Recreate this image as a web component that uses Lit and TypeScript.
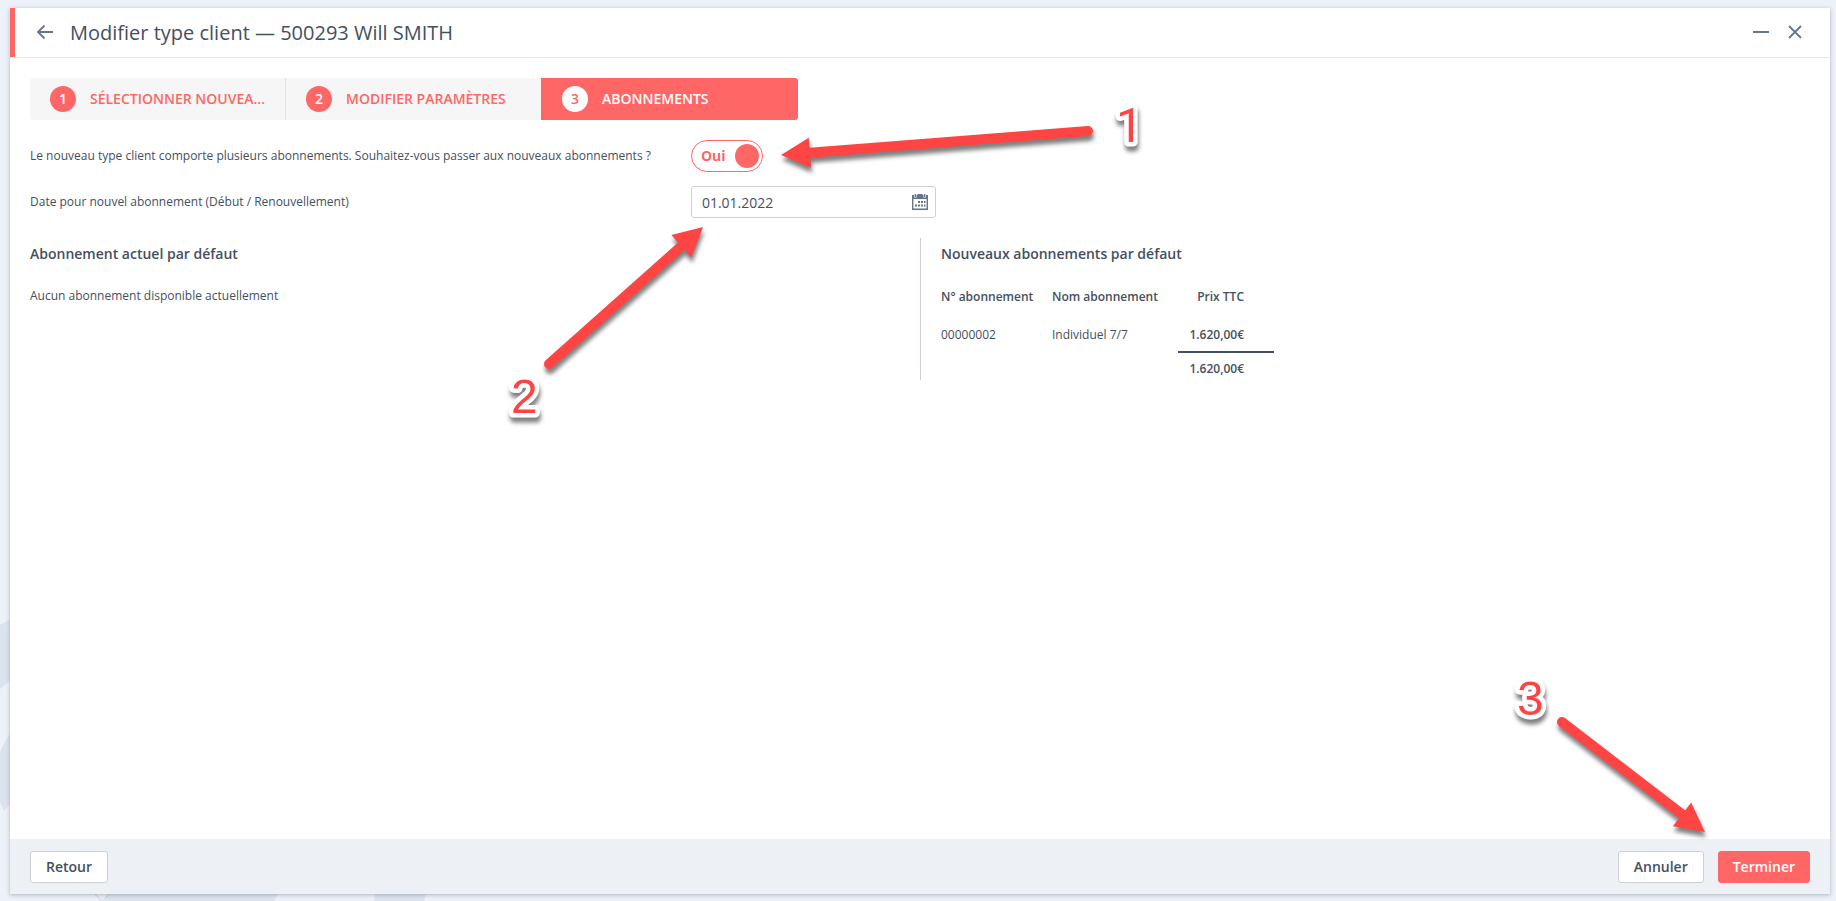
import { LitElement, html, css, svg } from "lit";
import { customElement, property, state } from "lit/decorators.js";

interface Step {
  label: string;
  title: string;
}

interface Subscription {
  id: string;
  name: string;
  price: string;
}

interface Callout {
  digit: string;
  style: string;
  textX: number;
  textY: number;
  tail: [number, number];
  tip: [number, number];
}

const HEAD_LENGTH = 29;
const HEAD_HALF = 15;

/** Wizard step bar with numbered circles. */
@customElement("step-bar")
export class StepBar extends LitElement {
  @property({ attribute: false }) steps: Step[] = [];
  @property({ type: Number }) current = 0;

  static styles = css`
    :host {
      display: block;
    }
    .steps {
      display: grid;
      grid-template-columns: repeat(3, 1fr);
      max-width: 768px;
      margin: 0;
      padding: 0;
      list-style: none;
      border-radius: 3px;
      overflow: hidden;
      background: #f6f6f6;
    }
    .item {
      display: flex;
      min-width: 0;
      border-right: 1px solid #e3e3e5;
    }
    .item:last-child {
      border-right: 0;
    }
    .item.before-active {
      border-right-color: #ff6666;
    }
    .step {
      flex: 1;
      min-width: 0;
      display: flex;
      align-items: center;
      gap: 14px;
      height: 42px;
      padding: 0 0 0 20px;
      border: 0;
      background: none;
      color: #ff6666;
      font: 600 14px/20px "Open Sans", sans-serif;
      text-align: left;
      text-transform: uppercase;
      cursor: pointer;
    }
    .circle {
      flex: none;
      width: 26px;
      height: 26px;
      border-radius: 50%;
      background: #ff6666;
      color: #ffffff;
      line-height: 26px;
      text-align: center;
    }
    .name {
      white-space: nowrap;
    }
    .active .step {
      background: #ff6666;
      color: #ffffff;
    }
    .active .circle {
      background: #ffffff;
      color: #ff6666;
    }
  `;

  private itemClass(i: number) {
    if (i === this.current) return "item active";
    return i === this.current - 1 ? "item before-active" : "item";
  }

  render() {
    return html`<ol class="steps">
      ${this.steps.map(
        (step, i) => html`<li class=${this.itemClass(i)}>
          <button class="step" type="button" title=${step.title}>
            <span class="circle">${i + 1}</span><span class="name">${step.label}</span>
          </button>
        </li>`
      )}
    </ol>`;
  }
}

/** Numbered arrows laid over the dialog. */
@customElement("callout-layer")
export class CalloutLayer extends LitElement {
  @property({ attribute: false }) callouts: Callout[] = [];

  static styles = css`
    :host {
      position: absolute;
      inset: 0;
      overflow: hidden;
      pointer-events: none;
    }
    .canvas {
      display: block;
      width: 100%;
      height: 100%;
    }
    .callout {
      filter: drop-shadow(1px 5px 2px rgba(0, 0, 0, 0.5));
    }
    .shaft {
      stroke: #ff4444;
      stroke-width: 10px;
      stroke-linecap: round;
    }
    .head {
      fill: #ff4444;
    }
    .digit {
      font: 48px "Liberation Sans", Arial, sans-serif;
      fill: #ff4444;
      stroke: #ffffff;
      stroke-width: 9px;
      stroke-linejoin: round;
      paint-order: stroke;
    }
    .digit.footless {
      font-family: Roboto, Arial, sans-serif;
    }
  `;

  private arrow(c: Callout) {
    const [x1, y1] = c.tail;
    const [x2, y2] = c.tip;
    const length = Math.hypot(x2 - x1, y2 - y1);
    const ux = (x2 - x1) / length;
    const uy = (y2 - y1) / length;
    const bx = x2 - ux * HEAD_LENGTH;
    const by = y2 - uy * HEAD_LENGTH;
    const points = [
      [x2, y2],
      [bx - uy * HEAD_HALF, by + ux * HEAD_HALF],
      [bx + uy * HEAD_HALF, by - ux * HEAD_HALF],
    ]
      .map((p) => p.join(","))
      .join(" ");
    return svg`<g class="callout">
      <line class="shaft" x1=${x1} y1=${y1} x2=${bx} y2=${by}></line>
      <polygon class="head" points=${points}></polygon>
    </g>
    <g class="callout"><text class="digit ${c.style}" x=${c.textX} y=${c.textY}>${c.digit}</text></g>`;
  }

  render() {
    return html`<svg class="canvas">${this.callouts.map((c) => this.arrow(c))}</svg>`;
  }
}

@customElement("app-root")
export class AppRoot extends LitElement {
  @state() private switchPlans = true;

  private steps: Step[] = [
    { label: "Sélectionner nouvea...", title: "Sélectionner nouveau type client" },
    { label: "Modifier paramètres", title: "Modifier paramètres" },
    { label: "Abonnements", title: "Abonnements" },
  ];

  private subscriptions: Subscription[] = [
    { id: "00000002", name: "Individuel 7/7", price: "1.620,00€" },
  ];

  private callouts: Callout[] = [
    { digit: "1", style: "footless", textX: 1116, textY: 142, tail: [1088, 131], tip: [781, 155] },
    { digit: "2", style: "", textX: 511, textY: 413, tail: [549, 364], tip: [703, 227] },
    { digit: "3", style: "", textX: 1517, textY: 715, tail: [1562, 722], tip: [1705, 832] },
  ];

  static styles = css`
    :host {
      position: relative;
      display: flex;
      box-sizing: border-box;
      min-height: 100vh;
      padding: 8px 6px 7px 10px;
      background: #edf1f9;
      color: #454f5e;
      font: 12px/18px "Open Sans", sans-serif;
    }
    .backdrop {
      position: absolute;
      left: 0;
      bottom: 0;
      width: 430px;
      height: 290px;
    }
    .window {
      position: relative;
      flex: 1;
      min-width: 0;
      display: flex;
      flex-direction: column;
      background: #ffffff;
      box-shadow: 0 1px 4px rgba(60, 70, 85, 0.35);
    }
    .titlebar {
      display: flex;
      align-items: center;
      height: 49px;
      padding: 0 24px 0 19px;
      border-bottom: 1px solid #e5e6e8;
      background: linear-gradient(#ff6666, #ff6666) no-repeat left / 5px 100%;
      padding-left: 24px;
    }
    .title {
      flex: 1;
      margin: 0 0 0 14px;
      font-size: 20px;
      font-weight: 400;
      line-height: 28px;
    }
    .tools {
      display: flex;
      gap: 12px;
    }
    .icon-button {
      display: flex;
      align-items: center;
      justify-content: center;
      width: 22px;
      height: 22px;
      padding: 0;
      border: 0;
      background: none;
      color: #66758c;
      cursor: pointer;
    }
    .titlebar .icon-button {
      height: 24px;
      padding-bottom: 2px;
    }
    .icon {
      display: block;
      fill: none;
      stroke: currentColor;
    }
    .body {
      flex: 1;
      padding: 20px;
    }
    .form {
      display: grid;
      grid-template-columns: max-content 245px;
      align-items: center;
      column-gap: 40px;
      row-gap: 14px;
      margin: 20px 0;
    }
    .toggle {
      display: flex;
      align-items: center;
      justify-content: space-between;
      box-sizing: border-box;
      width: 72px;
      height: 32px;
      padding: 0 3px 0 9px;
      border: 1px solid #ff6666;
      border-radius: 16px;
      color: #ff6666;
      font-size: 14px;
      font-weight: 700;
      cursor: pointer;
    }
    .toggle.off {
      flex-direction: row-reverse;
      padding: 0 9px 0 3px;
    }
    .knob {
      appearance: none;
      width: 24px;
      height: 24px;
      margin: 0;
      border-radius: 50%;
      background: #ff6666;
      cursor: pointer;
    }
    .date {
      display: flex;
      align-items: center;
      box-sizing: border-box;
      height: 32px;
      padding: 0 4px 0 10px;
      border: 1px solid #cbd0d8;
      border-radius: 3px;
    }
    .date-input {
      flex: 1;
      min-width: 0;
      padding: 2px 0 0;
      border: 0;
      outline: 0;
      background: none;
      color: #454f5e;
      font: 14px/20px "Open Sans", sans-serif;
    }
    .columns {
      display: grid;
      grid-template-columns: 1fr 1fr;
    }
    .pane + .pane {
      min-height: 142px;
      padding-left: 20px;
      border-left: 1px solid #cbd0d8;
    }
    .heading {
      margin: 0;
      padding: 6px 0 23px;
      font-size: 14px;
      font-weight: 600;
      line-height: 20px;
    }
    .text {
      margin: 0;
    }
    .table {
      border-spacing: 0;
    }
    .table th,
    .table td {
      padding: 0;
      text-align: left;
      font-weight: 400;
      line-height: 20px;
    }
    .table th {
      padding-bottom: 18px;
      font-weight: 600;
    }
    .table .id {
      width: 111px;
    }
    .table .name {
      width: 126px;
    }
    .table .price {
      width: 66px;
      padding-right: 30px;
      text-align: right;
      font-weight: 600;
    }
    .table tbody td {
      padding-bottom: 6px;
    }
    .table tfoot td {
      padding-top: 6px;
    }
    .table tfoot .price {
      border-top: 2px solid #454f5e;
    }
    .footer {
      display: flex;
      gap: 14px;
      padding: 12px 20px 11px;
      background: #edf0f5;
    }
    .button {
      box-sizing: border-box;
      height: 32px;
      padding: 0 15px;
      border: 1px solid #cbd0d8;
      border-radius: 3px;
      background: #ffffff;
      color: #454f5e;
      font: 600 14px/20px "Open Sans", sans-serif;
      cursor: pointer;
    }
    .button.first {
      margin-right: auto;
    }
    .button.primary {
      padding: 0 14px;
      border-color: #ff6666;
      background: #ff6666;
      color: #ffffff;
    }
  `;

  render() {
    return html`
      <svg class="backdrop" viewBox="0 0 430 290" aria-hidden="true">
        <path
          fill="#dbe3ee"
          d="M0 14 10 8V70L0 78ZM0 141Q4 131 10 123V193L4 200 0 191ZM105 283H278L274 290H105ZM375 283H426L424 290H374Z"
        />
        <path fill="#d3d8e0" d="M93 282H111L102 291Z" />
        <path fill="#edf0f5" d="M95 282H109L102 290Z" />
      </svg>
      <main class="window">
        <header class="titlebar">
          <button class="icon-button" type="button" aria-label="Précédent">
            <svg class="icon" width="18" height="16" viewBox="0 0 18 16" stroke-width="1.8">
              <path d="M17 8H2M8.500 1.500 2 8l6.500 6.500" />
            </svg>
          </button>
          <h1 class="title">Modifier type client — 500293 Will SMITH</h1>
          <div class="tools">
            <button class="icon-button" type="button" aria-label="Réduire">
              <svg class="icon" width="18" height="16" viewBox="0 0 18 16" stroke-width="2">
                <path d="M1 8H17" />
              </svg>
            </button>
            <button class="icon-button" type="button" aria-label="Fermer">
              <svg class="icon" width="16" height="16" viewBox="0 0 16 16" stroke-width="1.8">
                <path d="M2 2 14 14M14 2 2 14" />
              </svg>
            </button>
          </div>
        </header>
        <section class="body">
          <step-bar .steps=${this.steps} .current=${2}></step-bar>
          <div class="form">
            <label for="switch"
              >Le nouveau type client comporte plusieurs abonnements. Souhaitez-vous passer aux
              nouveaux abonnements ?</label
            >
            <label class="toggle ${this.switchPlans ? "" : "off"}">
              <span>${this.switchPlans ? "Oui" : "Non"}</span>
              <input
                class="knob"
                id="switch"
                type="checkbox"
                .checked=${this.switchPlans}
                @change=${(e: Event) =>
                  (this.switchPlans = (e.target as HTMLInputElement).checked)}
              />
            </label>
            <label for="date">Date pour nouvel abonnement (Début / Renouvellement)</label>
            <div class="date">
              <input class="date-input" id="date" type="text" value="01.01.2022" />
              <button class="icon-button" type="button" aria-label="Calendrier">
                <svg class="icon" width="16" height="16" viewBox="0 0 16 16">
                  <path d="M.7 2V15.300H15.300V2" stroke-width="1.400" />
                  <path
                    fill="currentColor"
                    stroke="none"
                    d="M0 1H2V3.500H4.500V1H5.500V0H10.500V1H11.500V3.500H14V1H16V5H0ZM6 7H8V9H6ZM9 7H11V9H9ZM12 7H13.500V9H12ZM3 10.500H5V12.500H3ZM6 10.500H8V12.500H6ZM9 10.500H11V12.500H9ZM12 10.500H13.500V12.500H12Z"
                  />
                  <path d="M3.300 0V3M12.700 0V3" stroke-width="1.400" />
                </svg>
              </button>
            </div>
          </div>
          <div class="columns">
            <section class="pane">
              <h2 class="heading">Abonnement actuel par défaut</h2>
              <p class="text">Aucun abonnement disponible actuellement</p>
            </section>
            <section class="pane">
              <h2 class="heading">Nouveaux abonnements par défaut</h2>
              <table class="table">
                <thead>
                  <tr>
                    <th class="id" scope="col">N° abonnement</th>
                    <th class="name" scope="col">Nom abonnement</th>
                    <th class="price" scope="col">Prix TTC</th>
                  </tr>
                </thead>
                <tbody>
                  ${this.subscriptions.map(
                    (s) => html`<tr>
                      <td>${s.id}</td>
                      <td>${s.name}</td>
                      <td class="price">${s.price}</td>
                    </tr>`
                  )}
                </tbody>
                <tfoot>
                  <tr>
                    <td></td>
                    <td></td>
                    <td class="price">1.620,00€</td>
                  </tr>
                </tfoot>
              </table>
            </section>
          </div>
        </section>
        <footer class="footer">
          <button class="button first" type="button">Retour</button>
          <button class="button" type="button">Annuler</button>
          <button class="button primary" type="button">Terminer</button>
        </footer>
      </main>
      <callout-layer .callouts=${this.callouts}></callout-layer>
    `;
  }
}
